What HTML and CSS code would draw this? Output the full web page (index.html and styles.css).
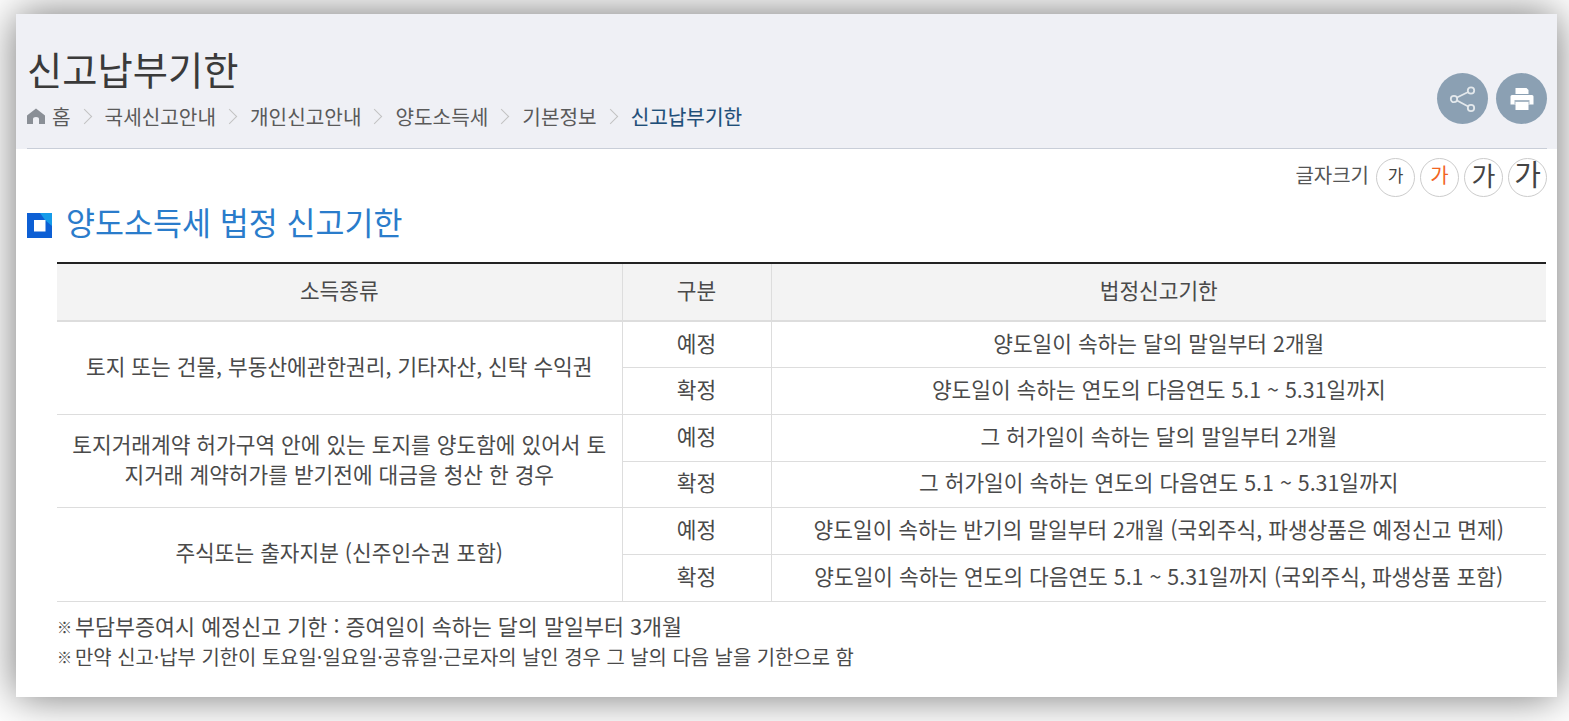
FILE: index.html
```html
<!DOCTYPE html>
<html lang="ko">
<head>
<meta charset="utf-8">
<title>신고납부기한</title>
<link rel="stylesheet" href="styles.css">
</head>
<body>
<main class="card">
  <header class="head">
    <div class="head-in">
      <div class="head-text">
        <h1 class="title">신고납부기한</h1>
        <nav class="crumbs">
          <svg class="home" viewBox="0 0 18 16" width="18" height="16"><path d="M9 0.500 L18 7.500 V16 H12 V11 Q12 9 9 9 Q6 9 6 11 V16 H0 V7.500 Z" fill="#8a8f96"/></svg>
          <span>홈</span><i class="sep"></i>
          <span>국세신고안내</span><i class="sep"></i>
          <span>개인신고안내</span><i class="sep"></i>
          <span>양도소득세</span><i class="sep"></i>
          <span>기본정보</span><i class="sep"></i>
          <span class="current">신고납부기한</span>
        </nav>
      </div>
      <div class="tools">
        <span class="tool"><svg viewBox="0 0 28 28" width="28" height="28" fill="none" stroke="#e3e8ec" stroke-width="1.800"><circle cx="22" cy="5.500" r="3.200"/><circle cx="5" cy="14" r="3.200"/><circle cx="22" cy="23" r="3.200"/><path d="M8 12.500 L19.200 7 M8 15.500 L19.200 21.500"/></svg></span>
        <span class="tool"><svg viewBox="0 0 24 24" width="24" height="24"><path d="M5.500 1h11l2 2v4h-13z" fill="#fff"/><path d="M2 8h20a1.500 1.500 0 0 1 1.500 1.500v8h-23v-8A1.500 1.500 0 0 1 2 8z" fill="#fff"/><path d="M4.500 13h15v4.500h-15z" fill="#a9b8c5"/><path d="M5.500 15h13v8h-13z" fill="#fff"/></svg></span>
      </div>
    </div>
  </header>
  <div class="size-row">
    <span class="size-label">글자크기</span>
    <span class="size s1">가</span>
    <span class="size s2">가</span>
    <span class="size s3">가</span>
    <span class="size s4">가</span>
  </div>
  <h2 class="section">
    <svg class="mark" viewBox="0 0 25 25" width="25" height="25"><path d="M0 0h25v25H0z" fill="#0d5fd4"/><path d="M13 0h12v13l-7-6z" fill="#159be9"/><path d="M7 7h11.500v11.500H7z" fill="#fff"/></svg>
    <span class="section-text">양도소득세 법정 신고기한</span>
  </h2>
  <table class="tbl">
    <colgroup><col class="c1"><col class="c2"><col class="c3"></colgroup>
    <thead>
      <tr><th>소득종류</th><th>구분</th><th>법정신고기한</th></tr>
    </thead>
    <tbody>
      <tr><td rowspan="2">토지 또는 건물, 부동산에관한권리, 기타자산, 신탁 수익권</td><td>예정</td><td>양도일이 속하는 달의 말일부터 2개월</td></tr>
      <tr><td>확정</td><td>양도일이 속하는 연도의 다음연도 5.1 ~ 5.31일까지</td></tr>
      <tr><td rowspan="2">토지거래계약 허가구역 안에 있는 토지를 양도함에 있어서 토지거래 계약허가를 받기전에 대금을 청산 한 경우</td><td>예정</td><td>그 허가일이 속하는 달의 말일부터 2개월</td></tr>
      <tr><td>확정</td><td>그 허가일이 속하는 연도의 다음연도 5.1 ~ 5.31일까지</td></tr>
      <tr><td rowspan="2">주식또는 출자지분 (신주인수권 포함)</td><td>예정</td><td>양도일이 속하는 반기의 말일부터 2개월 (국외주식, 파생상품은 예정신고 면제)</td></tr>
      <tr><td>확정</td><td>양도일이 속하는 연도의 다음연도 5.1 ~ 5.31일까지 (국외주식, 파생상품 포함)</td></tr>
    </tbody>
  </table>
  <p class="note n1"><span class="ref">※</span>부담부증여시 예정신고 기한 : 증여일이 속하는 달의 말일부터 3개월</p>
  <p class="note n2"><span class="ref">※</span>만약 신고·납부 기한이 토요일·일요일·공휴일·근로자의 날인 경우 그 날의 다음 날을 기한으로 함</p>
</main>
</body>
</html>
```
FILE: styles.css
```css
* { box-sizing: border-box; }
html, body { margin: 0; height: 721px; overflow: hidden; }
body {
  background: #fff;
  padding: 14px 12px 0 16px;
  font-family: "Noto Sans CJK KR", "Noto Sans", sans-serif;
  color: #333;
}
.card {
  width: 1541px;
  height: 683px;
  background: #fff;
  box-shadow: 0 0 40px rgba(0,0,0,.55);
  padding: 0 11px;
}
.head { background: #eff0f5; margin: 0 -11px; padding: 0 10px 0 11px; height: 135px; }
.head-in {
  height: 135px;
  border-bottom: 1px solid #c9ced8;
  display: flex;
  justify-content: space-between;
  padding-top: 27px;
}
.title { margin: 0; font-size: 38.300px; font-weight: 400; line-height: 55px; color: #3a3a3a; }
.crumbs { display: flex; align-items: center; height: 28px; margin-top: 6px; font-size: 20.200px; color: #5a5a5a; }
.home { margin-right: 7px; }
.sep {
  width: 11px; height: 11px; margin: 0 15px 0 8px;
  border-top: 1px solid #c2c2c2; border-right: 1px solid #c2c2c2;
  transform: rotate(45deg);
}
.current { color: #1f4e79; font-weight: 400; -webkit-text-stroke: .15px #1f4e79; }
.tools { display: flex; gap: 8px; padding-top: 32px; }
.tool {
  width: 51px; height: 51px; border-radius: 50%;
  background: #8ba0b3;
  display: flex; align-items: center; justify-content: center;
}
.size-row { display: flex; justify-content: flex-end; align-items: center; height: 38px; margin-top: 9px; margin-right: -1px; }
.size-label { font-size: 20px; color: #555; margin-right: 7px; padding-bottom: 5px; }
.size {
  width: 39px; height: 39px; border-radius: 50%;
  border: 1px solid #ccc; background: #fff;
  display: flex; align-items: center; justify-content: center;
  margin-left: 5px; color: #444; line-height: 1; padding-bottom: 5px;
}
.size.s1 { margin-left: 0; font-size: 17px; }
.size.s2 { font-size: 20px; color: #f26522; }
.size.s3 { font-size: 26px; }
.size.s4 { font-size: 29px; padding-bottom: 7px; }
.section {
  display: flex; align-items: center;
  margin: 4px 0 0; height: 44px;
  font-size: 31.500px; font-weight: 400; color: #2a7ccb;
}
.section-text { padding-bottom: 2px; }
.mark { margin-right: 14px; margin-top: 6px; flex: none; }
.tbl {
  margin: 18px 0 0 30px;
  width: 1489px;
  table-layout: fixed;
  border-collapse: collapse;
  border-top: 2px solid #222;
  font-size: 21.400px;
  color: #4a4a4a;
}
.c1 { width: 565px; }
.c2 { width: 149px; }
.tbl th, .tbl td {
  border: 1px solid #ddd;
  text-align: center;
  font-weight: 400;
  padding: 0 14px 4px;
  height: 46.700px;
  line-height: 30px;
  word-break: break-all;
}
.tbl th { background: #f3f3f3; height: 58px; border-bottom: 2px solid #ddd; }
.tbl th:first-child, .tbl td:first-child { border-left: 0; }
.tbl th:last-child, .tbl td:last-child { border-right: 0; }
.note { margin: 0 0 0 30px; color: #4a4a4a; line-height: 32px; }
.ref { display: inline-block; width: 18px; font-size: 15px; vertical-align: 2px; }
.n1 { margin-top: 8px; font-size: 21.750px; }
.n2 { margin-top: -1px; font-size: 19.900px; line-height: 30px; }
```
